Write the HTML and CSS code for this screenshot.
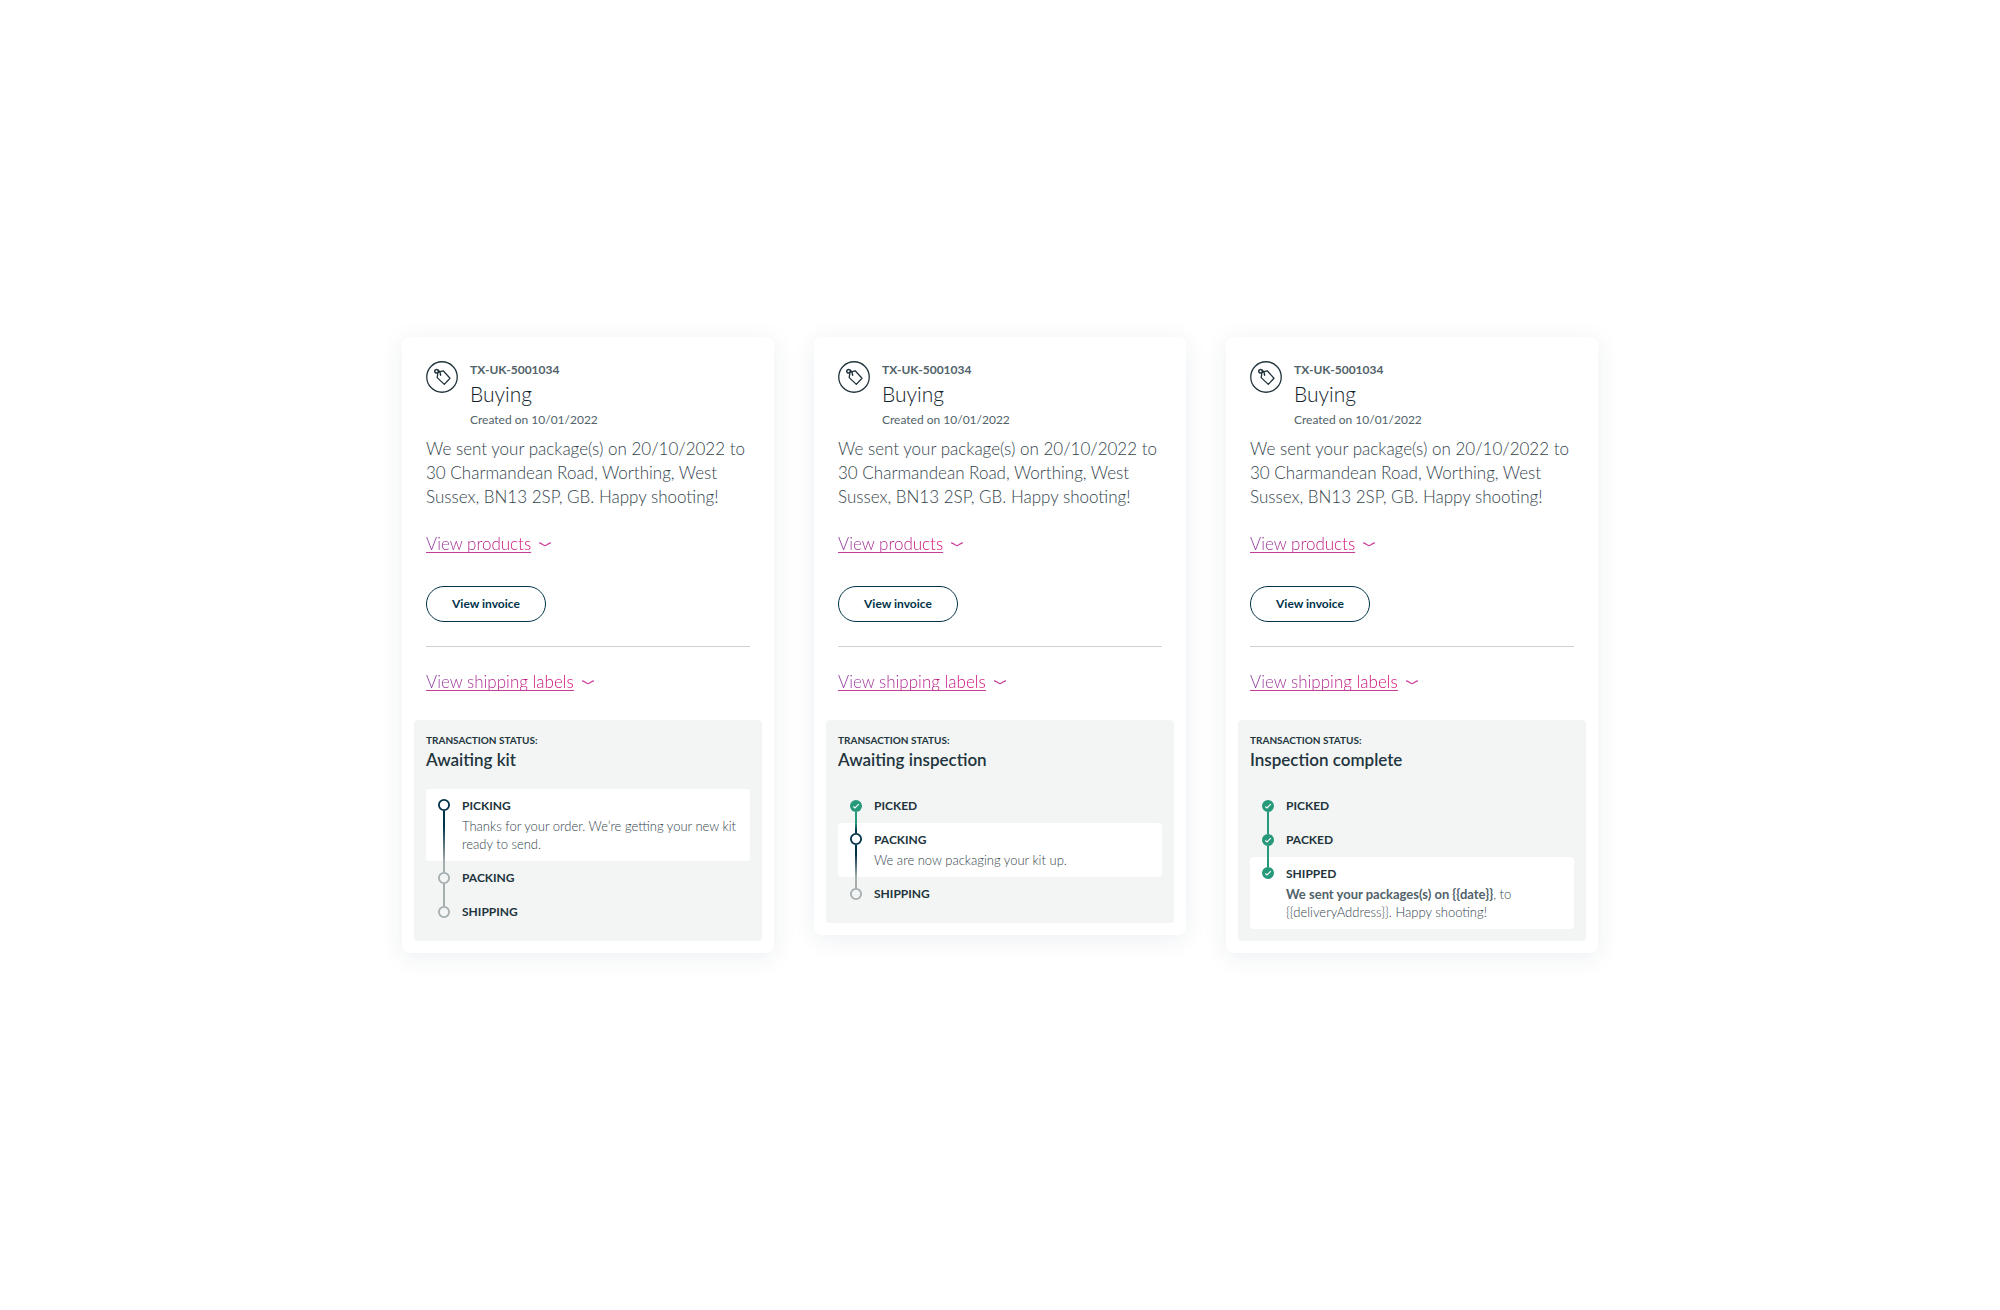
FILE: index.html
```html
<!DOCTYPE html>
<html lang="en">
<head>
<meta charset="utf-8">
<meta name="viewport" content="width=device-width, initial-scale=1">
<title>Transactions</title>
<link rel="stylesheet" href="styles.css">
</head>
<body>
<svg class="symbols" aria-hidden="true">
  <symbol id="tag" viewBox="0 0 32 32">
    <circle cx="16" cy="16" r="15.25" fill="none" stroke="currentColor" stroke-width="1.3"/>
    <path d="M12 11.2 L17.2 9.8 L24 17.2 L18.3 23.4 L11.2 16.6 Z" fill="none" stroke="currentColor" stroke-width="1.3" stroke-linejoin="round"/>
    <path d="M14.6 14.2 C14.6 11.6 12.8 8.6 10.4 8.6 C8.6 8.6 8.2 10.6 9.4 11.6 C10.6 12.6 12 11.6 12.4 10.4" fill="none" stroke="currentColor" stroke-width="1.5" stroke-linecap="round"/>
  </symbol>
  <symbol id="chevron" viewBox="0 0 12 5">
    <path d="M.5 .8 C2.6 1.2 4.2 3.6 6 3.7 C7.8 3.6 9.4 1.2 11.5 .8" fill="none" stroke="currentColor" stroke-width="1.2" stroke-linecap="round"/>
  </symbol>
  <symbol id="check" viewBox="0 0 12 12">
    <circle cx="6" cy="6" r="6" fill="currentColor"/>
    <path d="M3.3 6.5 L5 8 L8.8 4.2" fill="none" stroke="#fff" stroke-width="1.1"/>
  </symbol>
  <symbol id="ring" viewBox="0 0 12 12">
    <circle cx="6" cy="6" r="5.1" fill="none" stroke="currentColor" stroke-width="1.8"/>
  </symbol>
</svg>
<main class="cards">

  <article class="card">
    <header class="card-head">
      <svg class="tag-icon" aria-hidden="true"><use href="#tag"/></svg>
      <div>
        <p class="reference">TX-UK-5001034</p>
        <h2 class="title">Buying</h2>
        <p class="created">Created on 10/01/2022</p>
      </div>
    </header>
    <p class="summary">We sent your package(s) on 20/10/2022 to 30 Charmandean Road, Worthing, West Sussex, BN13 2SP, GB. Happy shooting!</p>
    <div class="toggle"><a href="#products">View products</a><svg class="chevron" aria-hidden="true"><use href="#chevron"/></svg></div>
    <button class="invoice" type="button">View invoice</button>
    <hr class="divider">
    <div class="toggle"><a href="#labels">View shipping labels</a><svg class="chevron" aria-hidden="true"><use href="#chevron"/></svg></div>
    <section class="status">
      <p class="status-label">Transaction status:</p>
      <h3 class="status-value">Awaiting kit</h3>
      <ol class="steps">
        <li class="step active current">
          <div class="rail"><svg class="marker"><use href="#ring"/></svg></div>
          <div class="step-body"><h4>Picking</h4><p>Thanks for your order. We’re getting your new kit ready to send.</p></div>
        </li>
        <li class="step">
          <div class="rail"><svg class="marker"><use href="#ring"/></svg></div>
          <div class="step-body"><h4>Packing</h4></div>
        </li>
        <li class="step">
          <div class="rail"><svg class="marker"><use href="#ring"/></svg></div>
          <div class="step-body"><h4>Shipping</h4></div>
        </li>
      </ol>
    </section>
  </article>

  <article class="card">
    <header class="card-head">
      <svg class="tag-icon" aria-hidden="true"><use href="#tag"/></svg>
      <div>
        <p class="reference">TX-UK-5001034</p>
        <h2 class="title">Buying</h2>
        <p class="created">Created on 10/01/2022</p>
      </div>
    </header>
    <p class="summary">We sent your package(s) on 20/10/2022 to 30 Charmandean Road, Worthing, West Sussex, BN13 2SP, GB. Happy shooting!</p>
    <div class="toggle"><a href="#products">View products</a><svg class="chevron" aria-hidden="true"><use href="#chevron"/></svg></div>
    <button class="invoice" type="button">View invoice</button>
    <hr class="divider">
    <div class="toggle"><a href="#labels">View shipping labels</a><svg class="chevron" aria-hidden="true"><use href="#chevron"/></svg></div>
    <section class="status">
      <p class="status-label">Transaction status:</p>
      <h3 class="status-value">Awaiting inspection</h3>
      <ol class="steps">
        <li class="step done">
          <div class="rail"><svg class="marker"><use href="#check"/></svg></div>
          <div class="step-body"><h4>Picked</h4></div>
        </li>
        <li class="step active current">
          <div class="rail"><svg class="marker"><use href="#ring"/></svg></div>
          <div class="step-body"><h4>Packing</h4><p>We are now packaging your kit up.</p></div>
        </li>
        <li class="step">
          <div class="rail"><svg class="marker"><use href="#ring"/></svg></div>
          <div class="step-body"><h4>Shipping</h4></div>
        </li>
      </ol>
    </section>
  </article>

  <article class="card">
    <header class="card-head">
      <svg class="tag-icon" aria-hidden="true"><use href="#tag"/></svg>
      <div>
        <p class="reference">TX-UK-5001034</p>
        <h2 class="title">Buying</h2>
        <p class="created">Created on 10/01/2022</p>
      </div>
    </header>
    <p class="summary">We sent your package(s) on 20/10/2022 to 30 Charmandean Road, Worthing, West Sussex, BN13 2SP, GB. Happy shooting!</p>
    <div class="toggle"><a href="#products">View products</a><svg class="chevron" aria-hidden="true"><use href="#chevron"/></svg></div>
    <button class="invoice" type="button">View invoice</button>
    <hr class="divider">
    <div class="toggle"><a href="#labels">View shipping labels</a><svg class="chevron" aria-hidden="true"><use href="#chevron"/></svg></div>
    <section class="status">
      <p class="status-label">Transaction status:</p>
      <h3 class="status-value">Inspection complete</h3>
      <ol class="steps">
        <li class="step done">
          <div class="rail"><svg class="marker"><use href="#check"/></svg></div>
          <div class="step-body"><h4>Picked</h4></div>
        </li>
        <li class="step done">
          <div class="rail"><svg class="marker"><use href="#check"/></svg></div>
          <div class="step-body"><h4>Packed</h4></div>
        </li>
        <li class="step done current">
          <div class="rail"><svg class="marker"><use href="#check"/></svg></div>
          <div class="step-body"><h4>Shipped</h4><p><strong>We sent your packages(s) on {{date}}</strong>, to {{deliveryAddress}}. Happy shooting!</p></div>
        </li>
      </ol>
    </section>
  </article>

</main>
</body>
</html>
```
FILE: styles.css
```css
:root {
  --ink: #22343c;
  --muted: #51626a;
  --body-light: #33444c;
  --navy: #003349;
  --green: #27997b;
  --grey: #a5adae;
  --panel: #f3f5f5;
}

* { box-sizing: border-box; }

body, p, h2, h3, h4, ol { margin: 0; padding: 0; }

body {
  background: #fff;
  color: var(--ink);
  font-family: Lato, "Open Sans", sans-serif;
}

.symbols { display: none; }

.cards {
  display: grid;
  grid-template-columns: repeat(3, minmax(0, 372px));
  justify-content: center;
  align-items: start;
  gap: 40px;
  padding: 337px 24px 48px;
}

.card {
  display: flex;
  flex-direction: column;
  align-items: flex-start;
  padding: 24px 24px 12px;
  border-radius: 8px;
  background: #fff;
  box-shadow: 0 4px 24px rgba(0, 51, 73, .08);
}

.card-head {
  display: flex;
  gap: 12px;
}

.tag-icon {
  flex: none;
  width: 32px;
  height: 32px;
}

.reference {
  color: var(--muted);
  font-size: 12px;
  font-weight: 700;
  line-height: 18px;
}

.title {
  margin-bottom: 2px;
  color: #0f2129;
  font-size: 21px;
  font-weight: 300;
  line-height: 30px;
}

.created {
  color: var(--muted);
  font-size: 12px;
  line-height: 18px;
}

.summary {
  margin-top: 8px;
  color: var(--body-light);
  font-size: 17px;
  font-weight: 300;
  line-height: 24px;
}

.toggle {
  display: flex;
  align-items: center;
  gap: 8px;
  margin-top: 23px;
  color: #cb3d9b;
  font-size: 17px;
  font-weight: 300;
  line-height: 24px;
}

.toggle a {
  background: linear-gradient(90deg, #8d3fa0, #d6006f);
  background-clip: text;
  -webkit-background-clip: text;
  color: transparent;
  text-decoration: underline 1px;
  text-decoration-color: #c43f9b;
  text-decoration-skip-ink: none;
  text-underline-offset: 2px;
}

.chevron { width: 12px; height: 5px; }

.invoice {
  height: 36px;
  margin-top: 30px;
  padding: 0 25px;
  border: 1px solid var(--navy);
  border-radius: 18px;
  background: #fff;
  color: var(--navy);
  font: 700 12px/18px Lato, "Open Sans", sans-serif;
}

.divider {
  align-self: stretch;
  height: 1px;
  margin: 24px 0 0;
  border: 0;
  background: #cfd1d4;
}

.status {
  align-self: stretch;
  margin: 26px -12px 0;
  padding: 12px;
  border-radius: 4px;
  background: var(--panel);
}

.status-label {
  font-size: 10px;
  font-weight: 700;
  line-height: 16px;
  text-transform: uppercase;
}

.status-value {
  font-size: 17px;
  font-weight: 600;
  line-height: 24px;
}

.steps {
  margin-top: 17px;
  list-style: none;
}

.step {
  display: flex;
  gap: 12px;
  padding: 0 8px 0 12px;
  border-radius: 4px;
  color: var(--grey);
}

.step.active { color: var(--navy); }
.step.done { color: var(--green); }
.step.current { background: #fff; }

/* marker with a connector segment above and below it */
.rail {
  display: flex;
  flex: none;
  flex-direction: column;
  align-items: center;
  width: 12px;
}

.rail::before,
.rail::after {
  content: "";
  width: 2px;
  background: currentColor;
}

.rail::before { height: 11px; }
.rail::after { flex: 1; }

.current .rail::before { height: 10px; }

.step.active .rail::before { background: linear-gradient(var(--green), var(--navy) 80%); }
.step.active .rail::after { background: linear-gradient(var(--navy) 30%, var(--grey)); }

.step:first-child .rail::before,
.step:last-child .rail::after { background: none; }

.marker {
  flex: none;
  width: 12px;
  height: 12px;
}

.step-body { padding: 8px 0; }

.step-body h4 {
  color: var(--ink);
  font-size: 12px;
  font-weight: 700;
  line-height: 18px;
  text-transform: uppercase;
}

.step-body p {
  margin-top: 2px;
  color: var(--body-light);
  font-size: 13px;
  font-weight: 300;
  line-height: 18px;
}

.step-body strong {
  color: var(--muted);
  font-weight: 700;
}
```
